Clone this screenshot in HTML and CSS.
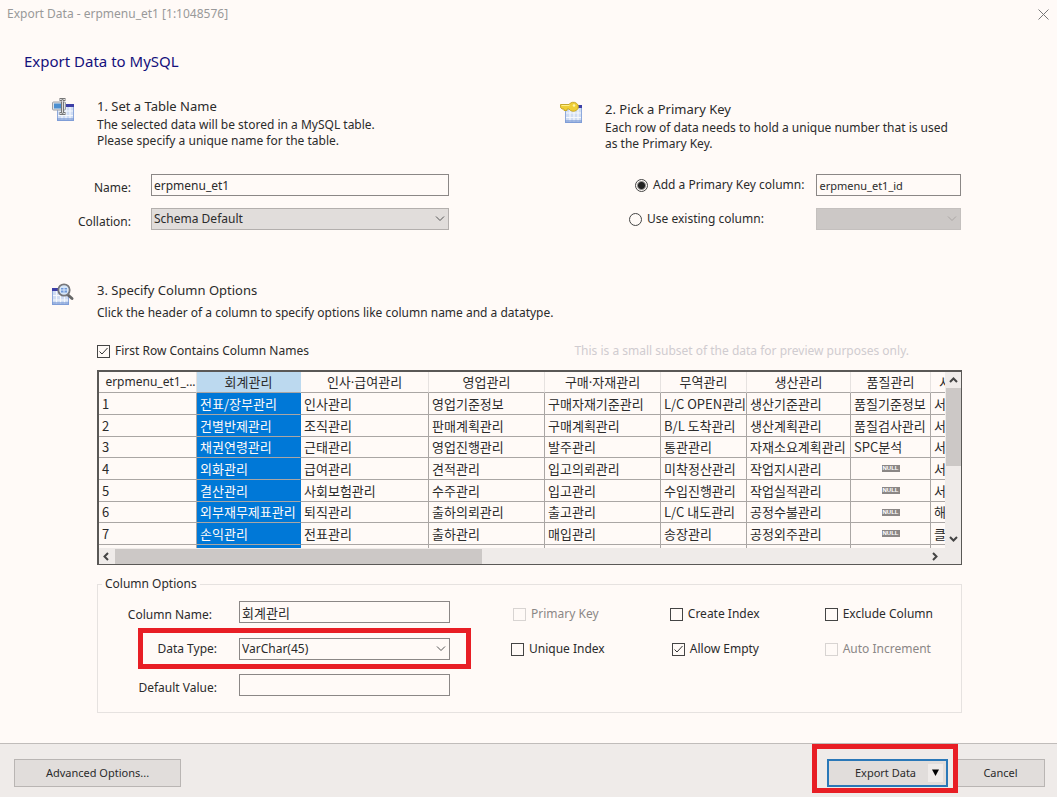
FILE: index.html
```html
<!DOCTYPE html>
<html lang="en">
<head>
<meta charset="utf-8">
<meta name="viewport" content="width=device-width, initial-scale=1">
<title>Export Data - erpmenu_et1 [1:1048576]</title>
<link rel="stylesheet" href="styles.css">
</head>
<body class="dialog">
<header class="titlebar">
  <span>Export Data - erpmenu_et1 [1:1048576]</span>
  <button class="close" type="button" aria-label="Close">
    <svg width="11" height="11" viewBox="0 0 11 11"><path d="M.5 .5l10 10M10.5 .5l-10 10" stroke="#777" fill="none"/></svg>
  </button>
</header>

<main class="content">
  <h1 class="page-title">Export Data to MySQL</h1>

  <div class="steps">
    <section class="step">
      <svg class="step-icon" width="23" height="24" viewBox="1 0 23 24">
        <rect x="6.500" y="6.500" width="16" height="16" fill="#cfdcf3" stroke="#8ea9dc"/>
        <path d="M12 6h11v3H12z" fill="#3d3fa6"/>
        <path d="M7 13h15M7 17.500h15M11 9v13M15 9v13M19 9v13" stroke="#fff" stroke-width="1.200" opacity=".8"/>
        <path d="M6 20h17v3H6z" fill="#7496d4" opacity=".6"/>
        <rect x="1.500" y="4" width="13" height="8" rx="1" fill="#dfe3e8" stroke="#9a9da3"/>
        <rect x="3" y="5.500" width="8" height="5" fill="#4c8fd0"/>
        <path d="M8.500 1.500h2l1 .8 1-.8h2M11.500 2.500v12M8.500 15.500h2l1-.8 1 .8h2" stroke="#777" stroke-width="3" fill="none"/>
        <path d="M9 1.500h1.500l1 .8 1-.8H14M11.500 2.500v12M9 15.500h1.500l1-.8 1 .8H14" stroke="#ddd" fill="none"/>
      </svg>
      <div class="step-body">
        <h2 class="step-title">1. Set a Table Name</h2>
        <p class="step-text">The selected data will be stored in a MySQL table.<br>Please specify a unique name for the table.</p>
      </div>
    </section>
    <section class="step step-second">
      <svg class="step-icon" width="23" height="24" viewBox="1 1 23 24">
        <rect x="6.500" y="6.500" width="16" height="16" fill="#cfdcf3" stroke="#8ea9dc"/>
        <path d="M15 5h8v3h-8z" fill="#3d3fa6"/>
        <path d="M7 13h15M7 17.500h15M11 9v13M15 9v13M19 9v13" stroke="#fff" stroke-width="1.200" opacity=".8"/>
        <path d="M6 20h17v3H6z" fill="#7496d4" opacity=".6"/>
        <path d="M1.500 4.500h8.500a5 4.500 0 1 1 0 4.500H8v1.500H5V9H3L1.300 7z" fill="#efce35" stroke="#c8a92a"/>
        <path d="M2.500 5.500h8" stroke="#fff08a"/>
        <circle cx="15" cy="5.500" r="1.300" fill="#fff6a8"/>
      </svg>
      <div class="step-body">
        <h2 class="step-title">2. Pick a Primary Key</h2>
        <p class="step-text">Each row of data needs to hold a unique number that is used<br>as the Primary Key.</p>
      </div>
    </section>

    <div class="form form-table">
      <label for="name">Name:</label>
      <input class="box" id="name" type="text" value="erpmenu_et1">
      <label for="collation">Collation:</label>
      <select class="box combo combo-gray" id="collation"><option>Schema Default</option></select>
    </div>
    <div class="form form-key">
      <label class="choice choice-add"><input class="radio" type="radio" name="key" checked>Add a Primary Key column:</label>
      <input class="box box-small" type="text" value="erpmenu_et1_id" aria-label="Primary key column name">
      <label class="choice"><input class="radio" type="radio" name="key">Use existing column:</label>
      <select class="box combo combo-off" aria-label="Existing column" disabled><option></option></select>
    </div>
  </div>

  <section class="step step-third">
    <svg class="step-icon" width="23" height="24" viewBox="0 -1 23 24">
      <rect x=".5" y="5.500" width="16" height="16" fill="#cfdcf3" stroke="#8ea9dc"/>
      <path d="M0 5h13v3H0z" fill="#3d3fa6"/>
      <path d="M1 12.500h15M1 17h15M4.500 8v13M8.500 8v13M12.500 8v13" stroke="#fff" stroke-width="1.200" opacity=".8"/>
      <path d="M0 19h17v3H0z" fill="#7496d4" opacity=".6"/>
      <path d="M15.500 11.500l4.500 4" stroke="#666" stroke-width="3" stroke-linecap="round"/>
      <circle cx="12" cy="7" r="5.700" fill="#d6e6f8" stroke="#77777a" stroke-width="1.800"/>
      <path d="M9 5h6v4.500H9z" fill="#6f98d8"/><path d="M9 7h6M12 5v4.500" stroke="#dce9fa"/>
    </svg>
    <div class="step-body">
      <h2 class="step-title">3. Specify Column Options</h2>
      <p class="step-text">Click the header of a column to specify options like column name and a datatype.</p>
    </div>
  </section>

  <div class="details">
    <div class="preview-bar">
      <label class="choice"><input class="check" type="checkbox" checked>First Row Contains Column Names</label>
      <span class="hint">This is a small subset of the data for preview purposes only.</span>
    </div>

    <div class="preview">
      <div class="viewport">
        <table class="data">
          <colgroup><col class="w98"><col class="w104"><col class="w128"><col class="w116"><col class="w116"><col class="w86"><col class="w104"><col class="w80"><col class="w104"></colgroup>
          <thead><tr><th class="corner">erpmenu_et1_...</th><th class="picked">회계관리</th><th>인사·급여관리</th><th>영업관리</th><th>구매·자재관리</th><th>무역관리</th><th>생산관리</th><th>품질관리</th><th class="last">서</th></tr></thead>
          <tbody>
            <tr><td>1</td><td class="picked">전표/장부관리</td><td>인사관리</td><td>영업기준정보</td><td>구매자재기준관리</td><td>L/C OPEN관리</td><td>생산기준관리</td><td>품질기준정보</td><td>서</td></tr>
            <tr><td>2</td><td class="picked">건별반제관리</td><td>조직관리</td><td>판매계획관리</td><td>구매계획관리</td><td>B/L 도착관리</td><td>생산계획관리</td><td>품질검사관리</td><td>서</td></tr>
            <tr><td>3</td><td class="picked">채권연령관리</td><td>근태관리</td><td>영업진행관리</td><td>발주관리</td><td>통관관리</td><td>자재소요계획관리</td><td>SPC분석</td><td>서</td></tr>
            <tr><td>4</td><td class="picked">외화관리</td><td>급여관리</td><td>견적관리</td><td>입고의뢰관리</td><td>미착정산관리</td><td>작업지시관리</td><td class="empty"><span class="null">NULL</span></td><td>서</td></tr>
            <tr><td>5</td><td class="picked">결산관리</td><td>사회보험관리</td><td>수주관리</td><td>입고관리</td><td>수입진행관리</td><td>작업실적관리</td><td class="empty"><span class="null">NULL</span></td><td>서</td></tr>
            <tr><td>6</td><td class="picked">외부재무제표관리</td><td>퇴직관리</td><td>출하의뢰관리</td><td>출고관리</td><td>L/C 내도관리</td><td>공정수불관리</td><td class="empty"><span class="null">NULL</span></td><td>해</td></tr>
            <tr><td>7</td><td class="picked">손익관리</td><td>전표관리</td><td>출하관리</td><td>매입관리</td><td>송장관리</td><td>공정외주관리</td><td class="empty"><span class="null">NULL</span></td><td>클</td></tr>
            <tr><td></td><td class="picked"></td><td></td><td></td><td></td><td></td><td></td><td></td><td></td></tr>
          </tbody>
        </table>
      </div>
      <div class="scroll scroll-y">
        <svg width="9" height="6" viewBox="0 0 9 6"><path d="M1 5l3.500-3.500L8 5"/></svg>
        <div class="thumb"></div>
        <svg width="9" height="6" viewBox="0 0 9 6"><path d="M1 1l3.500 3.500L8 1"/></svg>
      </div>
      <div class="scroll scroll-x">
        <svg width="6" height="9" viewBox="0 0 6 9"><path d="M5 1L1.500 4.500 5 8"/></svg>
        <div class="thumb"></div>
        <svg width="6" height="9" viewBox="0 0 6 9"><path d="M1 1l3.500 3.500L1 8"/></svg>
      </div>
    </div>

    <fieldset class="options">
      <legend>Column Options</legend>
      <div class="fields">
        <div class="field field-first"><label for="colname">Column Name:</label><input class="box box-name" id="colname" type="text" value="회계관리"></div>
        <div class="field marked"><label for="dtype">Data Type:</label><select class="box combo" id="dtype"><option>VarChar(45)</option></select></div>
        <div class="field field-last"><label for="defval">Default Value:</label><input class="box" id="defval" type="text"></div>
      </div>
      <div class="flags">
        <div class="flag-col">
          <label class="choice off flag-in"><input class="check" type="checkbox" disabled>Primary Key</label>
          <label class="choice"><input class="check" type="checkbox">Unique Index</label>
        </div>
        <div class="flag-col">
          <label class="choice"><input class="check" type="checkbox">Create Index</label>
          <label class="choice flag-in"><input class="check" type="checkbox" checked>Allow Empty</label>
        </div>
        <div class="flag-col">
          <label class="choice"><input class="check" type="checkbox">Exclude Column</label>
          <label class="choice off"><input class="check" type="checkbox" disabled>Auto Increment</label>
        </div>
      </div>
    </fieldset>
  </div>
</main>

<footer class="footer">
  <button class="btn btn-adv" type="button">Advanced Options...</button>
  <div class="export marked">
    <button class="btn btn-export" type="button"><span class="btn-text">Export Data</span><span class="drop"><svg width="7" height="7" viewBox="0 0 7 7"><path d="M0 .5h7L3.500 7z" fill="#000"/></svg></span></button>
  </div>
  <button class="btn btn-cancel" type="button">Cancel</button>
</footer>
</body>
</html>
```
FILE: styles.css
```css
* { box-sizing: border-box; }

.dialog {
  margin: 0;
  min-height: 100vh;
  display: flex;
  flex-direction: column;
  background: #fffaf7;
  color: #2b2b2b;
  font: 12px/16px "Noto Sans", "Noto Sans CJK KR", sans-serif;
}

input, select, button { font: inherit; color: inherit; }

.titlebar {
  display: flex;
  justify-content: space-between;
  align-items: center;
  height: 28px;
  padding: 0 8px 0 7px;
  color: #999;
}

.close {
  display: flex;
  padding: 0;
  border: 0;
  background: none;
}

.content { flex: 1; padding: 0 95px 24px 52px; }

.page-title {
  margin: 21px 0 0 -28px;
  font-size: 15px;
  line-height: 24px;
  font-weight: 400;
  color: #14107c;
}

.steps {
  display: grid;
  grid-template-columns: 1fr 402px;
  padding-top: 25px;
}

.step { display: flex; gap: 22px; }
.step-second { padding-top: 3px; }
.step-icon { flex: none; }
.step-title { margin: 0; font-size: 13px; line-height: 17px; font-weight: 400; }
.step-text { margin: 2px 0 0; }

.form { display: grid; align-items: center; }
.form-table {
  grid-template-columns: 79px 298px;
  gap: 12px 20px;
  padding-top: 22px;
  align-content: start;
}
.form-table label { padding-top: 6px; text-align: right; }
.form-key {
  grid-template-columns: 1fr 145px;
  gap: 12px;
  padding: 22px 2px 0 69px;
  align-content: start;
}

.box {
  width: 100%;
  height: 22px;
  margin: 0;
  padding: 0 2px;
  border: 1px solid #8b8786;
  border-radius: 0;
  background-color: #fffaf7;
  outline: 0;
}
.box-small { font-size: 11px; }
.box-name { font-size: 13px; }

.combo {
  appearance: none;
  background-image: url("data:image/svg+xml,%3Csvg xmlns='http://www.w3.org/2000/svg' width='10' height='6'%3E%3Cpath d='M1 .5l4 4 4-4' fill='none' stroke='%23555'/%3E%3C/svg%3E");
  background-repeat: no-repeat;
  background-position: right 3px center;
}
.combo-gray { background-color: #e1dddb; border-color: #b3afad; }
.combo-off {
  background-color: #ccc8c6;
  background-image: url("data:image/svg+xml,%3Csvg xmlns='http://www.w3.org/2000/svg' width='10' height='6'%3E%3Cpath d='M1 .5l4 4 4-4' fill='none' stroke='%23aaa6a4'/%3E%3C/svg%3E");
  border-color: #c4c0be;
  opacity: 1;
}

.choice { display: flex; align-items: center; gap: 5px; white-space: nowrap; }
.choice-add { padding-left: 6px; }

.radio, .check {
  appearance: none;
  flex: none;
  width: 13px;
  height: 13px;
  margin: 0;
  border: 1px solid #444;
  background: #fffaf7;
}
.radio { border-radius: 50%; }
.radio:checked { background: radial-gradient(circle, #222 3px, #fffaf7 5px); }
.check:checked {
  background: url("data:image/svg+xml,%3Csvg xmlns='http://www.w3.org/2000/svg' width='11' height='11'%3E%3Cpath d='M1.500 5.500l2.500 2.500 5.500-6' fill='none' stroke='%23333'/%3E%3C/svg%3E") center no-repeat;
}
.check:disabled { border-color: #d8d4d2; }
.off { color: #8b8786; }

.step-third { padding-top: 52px; }
.step-third .step-text { margin-top: 6px; }

.details { padding-left: 45px; }

.preview-bar {
  display: flex;
  justify-content: space-between;
  padding: 22px 53px 11px 0;
}
.hint { color: #d0ccd0; }

.preview {
  display: grid;
  grid-template: 176px 16px / 1fr 16px;
  border: 1px solid #5a5856;
  border-width: 2px 1px 1px 2px;
  background: #efebe9;
}

.viewport { overflow: hidden; background: #fffaf7; }

.data {
  table-layout: fixed;
  width: 936px;
  border-collapse: separate;
  border-spacing: 0;
  font-size: 13px;
  line-height: 18px;
  font-family: "Noto Sans CJK KR", sans-serif;
}
.data tr { height: 22px; }
.data tbody tr:nth-child(3n) { height: 21px; }
.data thead tr { height: 21px; }
.data th, .data td {
  padding: 0 3px;
  border-right: 1px solid #aaa6a4;
  border-bottom: 1px solid #aaa6a4;
  text-align: left;
  font-weight: 400;
  white-space: nowrap;
}
.data th {
  border-right-color: #e6e2e0;
  text-align: center;
  font-family: "Noto Sans", "Noto Sans CJK KR", sans-serif;
}
.data .corner { padding: 0 0 0 6px; font-size: 12px; }
.data .picked { background: #0078d7; color: #fffaf7; border-right-color: #0078d7; }
.data th.picked { background: #bcd9ef; color: #2b2b2b; border-right-color: #bcd9ef; }
.data .empty { text-align: center; }
.data .last { padding: 0 8px; text-align: left; }
.w98 { width: 98px; }
.w104 { width: 104px; }
.w128 { width: 128px; }
.w116 { width: 116px; }
.w86 { width: 86px; }
.w80 { width: 80px; }

.null {
  display: block;
  width: 18px;
  height: 7px;
  margin: 0 auto;
  background: #8b8786;
  color: #fff;
  font: 700 6px/7px "Liberation Sans", sans-serif;
}

.scroll { display: flex; align-items: center; }
.scroll path { fill: none; stroke: #444; stroke-width: 2; }
.scroll .thumb { background: #ccc8c6; }
.scroll-y { flex-direction: column; padding: 5px 0 6px; }
.scroll-y .thumb { width: 15px; height: 78px; margin: 5px 0 auto; }
.scroll-x { padding: 0 7px 0 4px; }
.scroll-x .thumb { width: 44%; height: 15px; margin: 0 auto 0 6px; }

.options {
  display: flex;
  margin: 11px 0 0;
  padding: 9px 28px 16px 24px;
  border: 1px solid #e6e2e0;
}
.options legend { margin-left: -20px; padding: 0 3px; }

.fields { display: grid; gap: 14px; width: 329px; }
.field {
  display: grid;
  grid-template-columns: 95px 211px;
  gap: 22px;
  align-items: center;
}
.field label { text-align: right; }
.field-first { padding-bottom: 1px; }
.field-first label { padding: 6px 5px 0 0; }
.field-last label { padding-top: 6px; }

.marked { position: relative; }
.marked::after {
  content: "";
  position: absolute;
  inset: -10px -20px -9px 16px;
  border: 5px solid #e81e25;
  pointer-events: none;
}

.flags { flex: 1; display: flex; justify-content: space-between; padding: 5px 0 0 60px; }
.flag-col { display: grid; gap: 19px; align-content: start; }
.flag-in { padding-left: 2px; }

.footer {
  display: flex;
  align-items: center;
  height: 54px;
  padding: 4px 12px 0 14px;
  border-top: 1px solid #c0bcba;
  background: #efebe9;
}
.btn {
  height: 28px;
  padding: 0;
  border: 1px solid #b9b5b3;
  border-radius: 0;
  background: #e1dddb;
  font-size: 11px;
}
.btn-adv { width: 167px; }
.export { margin-left: auto; }
.export.marked::after { inset: -15px -10px -6px -15px; }
.btn-export { display: flex; width: 121px; align-items: center; border: 2px solid #2a78b8; }
.btn-text { flex: 1; padding-left: 14px; }
.drop { display: grid; place-items: center; width: 15px; height: 18px; margin-right: 3px; background: #efebe9; }
.btn-cancel { width: 89px; margin-left: 8px; }
```
